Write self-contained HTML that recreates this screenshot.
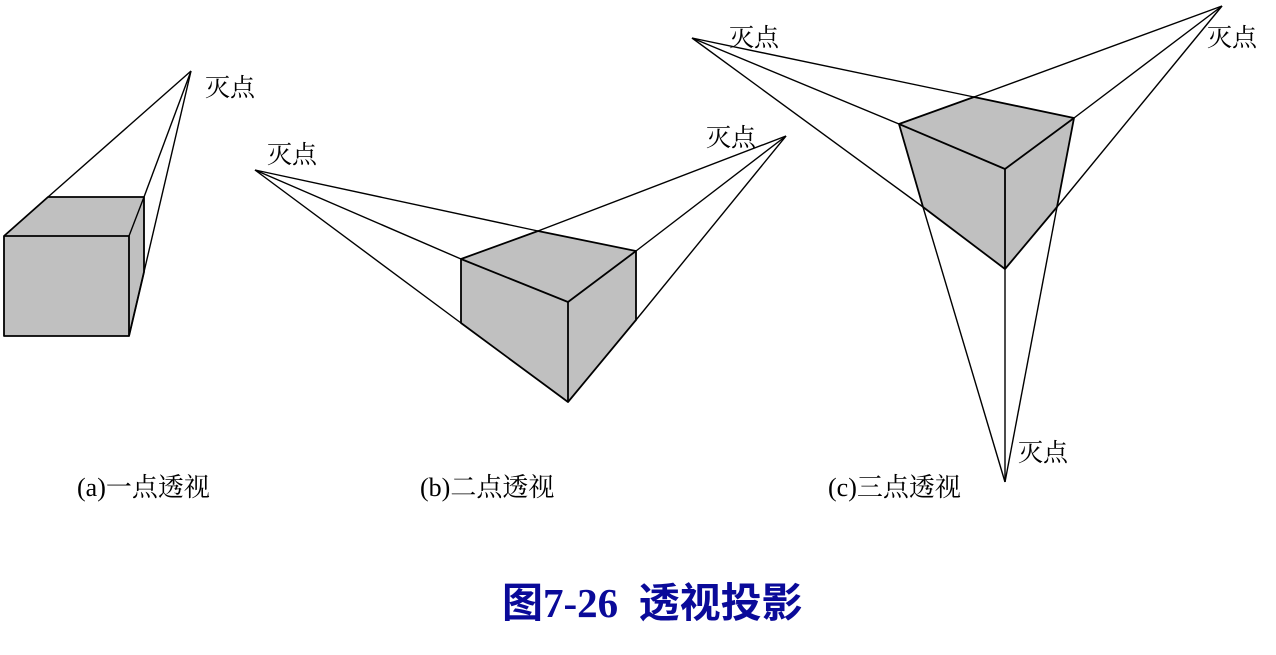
<!DOCTYPE html>
<html><head><meta charset="utf-8"><style>
body{margin:0;background:#fff;width:1276px;height:650px;overflow:hidden}
svg text{font-family:"Liberation Serif","Noto Serif CJK SC",serif;font-size:25px;fill:#000}
</style></head><body>
<svg width="1276" height="650" viewBox="0 0 1276 650" xmlns="http://www.w3.org/2000/svg">
<g stroke="#000" stroke-width="1.4" fill="none" stroke-linejoin="round">
<polygon points="4,236 48,197 144,197 144,272 129,336 4,336" fill="#c0c0c0" stroke-width="1.8"/>
<line x1="48" y1="197" x2="191" y2="71"/>
<line x1="144" y1="197" x2="191" y2="71"/>
<line x1="129" y1="336" x2="191" y2="71"/>
<polyline points="4,236 129,236 129,336" stroke-width="1.8"/>
<line x1="129" y1="236" x2="144" y2="197"/>
<polygon points="461,259 538,231 636,251 636,320 568,402 461,323" fill="#c0c0c0" stroke-width="1.8"/>
<polyline points="461,259 568,302 636,251" stroke-width="1.8"/>
<line x1="568" y1="302" x2="568" y2="402" stroke-width="1.8"/>
<line x1="255" y1="170" x2="461" y2="259"/>
<line x1="255" y1="170" x2="461" y2="323"/>
<line x1="255" y1="170" x2="538" y2="231"/>
<line x1="538" y1="231" x2="786" y2="136"/>
<line x1="636" y1="251" x2="786" y2="136"/>
<line x1="636" y1="320" x2="786" y2="136"/>
<polygon points="899,124 974,97 1074,118 1057,207 1005,269 923,207" fill="#c0c0c0" stroke-width="1.8"/>
<polyline points="899,124 1005,169 1074,118" stroke-width="1.8"/>
<line x1="1005" y1="169" x2="1005" y2="269" stroke-width="1.8"/>
<line x1="1005" y1="269" x2="1005" y2="482"/>
<line x1="692" y1="38" x2="974" y2="97"/>
<line x1="692" y1="38" x2="899" y2="124"/>
<line x1="692" y1="38" x2="923" y2="207"/>
<line x1="1222" y1="6" x2="974" y2="97"/>
<line x1="1222" y1="6" x2="1074" y2="118"/>
<line x1="1222" y1="6" x2="1057" y2="207"/>
<line x1="923" y1="207" x2="1005" y2="482"/>
<line x1="1057" y1="207" x2="1005" y2="482"/>
</g>
<text x="205" y="96">灭点</text>
<text x="267" y="163">灭点</text>
<text x="706" y="146">灭点</text>
<text x="729" y="46">灭点</text>
<text x="1207" y="46">灭点</text>
<text x="1018" y="461">灭点</text>
<text x="77" y="496" style="font-size:26px">(a)一点透视</text>
<text x="420" y="496" style="font-size:26px">(b)二点透视</text>
<text x="828" y="496" style="font-size:26px">(c)三点透视</text>
<text x="502" y="617" style="font-size:41px;font-weight:bold;fill:#0a0a99;font-family:'Liberation Serif','Noto Sans CJK SC',sans-serif">图7-26&#160;&#160;透视投影</text>
</svg>
</body></html>
